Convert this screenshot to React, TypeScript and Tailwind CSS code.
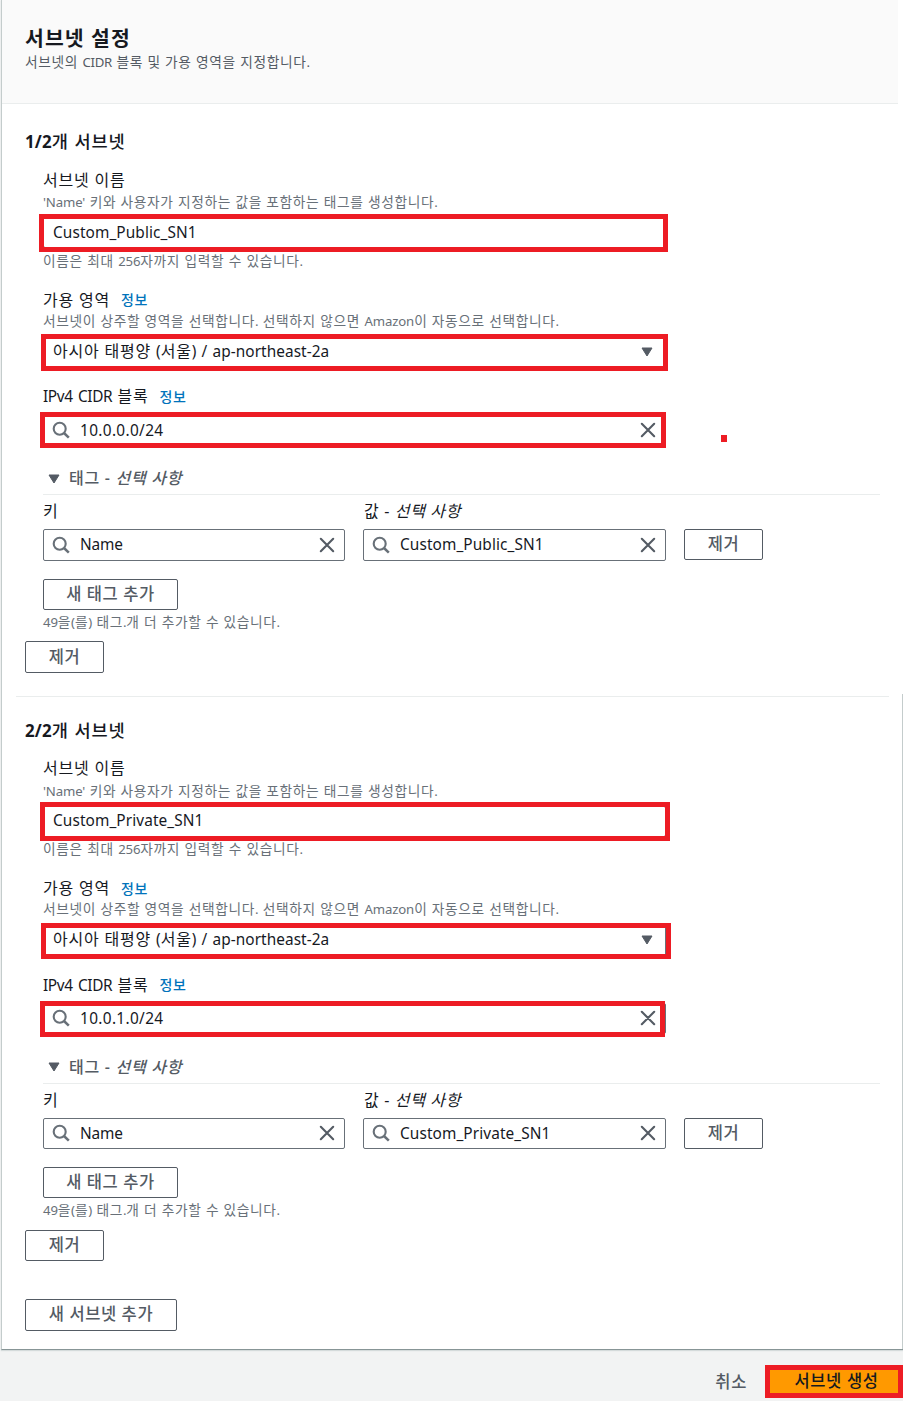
import { ReactNode } from 'react';
import clsx from 'clsx';

type Subnet = {
  title: string;
  name: string;
  cidr: string;
  nameMark: string;
  zoneMark: string;
  cidrMark: string;
};

const subnets: Subnet[] = [
  {
    title: '1/2개 서브넷',
    name: 'Custom_Public_SN1',
    cidr: '10.0.0.0/24',
    nameMark: '-left-[4px] -top-[3px] w-[629px] h-[38px]',
    zoneMark: '-left-[2px] -top-[3px] w-[627px] h-[37px]',
    cidrMark: '-left-[3px] -top-[2.4px] w-[626px] h-[36px]',
  },
  {
    title: '2/2개 서브넷',
    name: 'Custom_Private_SN1',
    cidr: '10.0.1.0/24',
    nameMark: '-left-[3px] -top-[3.5px] w-[630px] h-[39px]',
    zoneMark: '-left-[2px] -top-[2.5px] w-[630px] h-[36px]',
    cidrMark: '-left-[3px] -top-[1.9px] w-[625px] h-[36px]',
  },
];

// Hangul is set a little larger and wider than the Latin runs inside the same sentence
function Ko({ text, latin = 'tracking-[-0.01em]' }: { text: string; latin?: string }) {
  const parts = text.split(/([A-Za-z0-9'()\/.-]+)/);
  return (
    <span className="text-[1.04em] tracking-[0.045em] [word-spacing:0.02em]">
      {parts.map((part, i) => (i % 2 ? <span key={i} className={clsx('text-[0.9615em]', latin)}>{part}</span> : part))}
    </span>
  );
}

function SearchIcon() {
  return (
    <svg className="w-[18px] h-[18px] shrink-0" viewBox="0 0 18 18" fill="none" stroke="#687078" strokeWidth="2.1">
      <circle cx="7.7" cy="7.7" r="6" />
      <path d="M12 12l4.8 4.6" strokeWidth="2.5" />
    </svg>
  );
}

function CloseIcon() {
  return (
    <svg className="w-4 h-4 shrink-0" viewBox="0 0 16 16" fill="none" stroke="#545b64" strokeWidth="2.1" strokeLinecap="round">
      <path d="M1.8 1.8l12.4 12.4M14.2 1.8L1.8 14.2" />
    </svg>
  );
}

function CaretIcon() {
  return (
    <svg className="w-3 h-[10px] shrink-0" viewBox="0 0 12 10" fill="#545b64" stroke="#545b64" strokeLinejoin="round">
      <path d="M1 1h10L6 9z" />
    </svg>
  );
}

function Mark({ className }: { className: string }) {
  return <span className={clsx('absolute border-5 border-[#ed1c24] pointer-events-none', className)} />;
}

function Button({ className, children }: { className: string; children: ReactNode }) {
  return (
    <button
      className={clsx(
        'flex items-center justify-center border border-[#545b64] rounded-[2px] bg-white text-[#545b64] font-medium text-[16.5px] tracking-[0.035em] pb-[0.6px]',
        className
      )}
    >
      {children}
    </button>
  );
}

function SearchInput({ value, tracking, className }: { value: string; tracking: string; className: string }) {
  return (
    <div className={clsx('flex items-center h-[31.2px] border border-[#687078] rounded-[2px] bg-white pl-2 pr-[9px]', className)}>
      <SearchIcon />
      <span className={clsx('flex-1 pl-[10px]', tracking)}>{value}</span>
      <CloseIcon />
    </div>
  );
}

function Label({ info, className, children }: { info?: boolean; className?: string; children: ReactNode }) {
  return (
    <div className={clsx('flex items-center h-[22px] pt-[0.6px]', className)}>
      <span>{children}</span>
      {info && <a className="ml-[11px] text-[14px] tracking-[0.05em] font-medium text-[#0073bb]">정보</a>}
    </div>
  );
}

function Hint({ className, text }: { className?: string; text: string }) {
  return (
    <p className={clsx('h-5 leading-5 text-[13.2px] text-[#687078]', className)}>
      <Ko text={text} />
    </p>
  );
}

function SubnetForm({ subnet }: { subnet: Subnet }) {
  return (
    <section className="pl-[23px] text-[15.4px] leading-[22px]">
      <h3 className="h-6 leading-[22px] text-[16.9px] font-medium">
        <Ko text={subnet.title} latin="font-bold tracking-[0.01em]" />
      </h3>

      <div className="pl-[18px] pt-[15px]">
        <Label>
          <Ko text="서브넷 이름" />
        </Label>
        <Hint className="mt-px" text="'Name' 키와 사용자가 지정하는 값을 포함하는 태그를 생성합니다." />
        <div className="relative w-[623px] mt-[5px]">
          <div className="flex items-center h-[31.2px] border border-[#687078] rounded-[2px] pl-[9px] tracking-[0.006em]">
            {subnet.name}
          </div>
          <Mark className={subnet.nameMark} />
        </div>
        <Hint className="mt-[2.8px]" text="이름은 최대 256자까지 입력할 수 있습니다." />

        <Label info className="mt-[18px]">
          <Ko text="가용 영역" />
        </Label>
        <Hint text="서브넷이 상주할 영역을 선택합니다. 선택하지 않으면 Amazon이 자동으로 선택합니다." />
        <div className="relative w-[623px] mt-[6px]">
          <div className="flex items-center justify-between h-[31.2px] border border-[#687078] rounded-[2px] pl-[9px] pr-3 pb-[2px]">
            <span className="pb-px">
              <Ko text="아시아 태평양 (서울) / ap-northeast-2a" latin="tracking-[0.004em]" />
            </span>
            <CaretIcon />
          </div>
          <Mark className={subnet.zoneMark} />
        </div>

        <Label info className="mt-[17.2px]">
          <Ko text="IPv4 CIDR 블록" latin="tracking-[-0.022em]" />
        </Label>
        <div className="relative w-[623px] mt-[7px]">
          <SearchInput value={subnet.cidr} tracking="pt-[2px] tracking-[0.022em]" className="w-full" />
          <Mark className={subnet.cidrMark} />
        </div>

        <div className="flex items-center h-[22px] mt-[22.4px] pl-[5px] font-medium text-[#545b64]">
          <CaretIcon />
          <span className="ml-[9px] pb-[1.4px] text-[16px] tracking-[0.045em]">
            태그 - <i>선택 사항</i>
          </span>
        </div>
        <hr className="mt-[4.4px] w-[837px] border-t border-[#eaeded]" />

        <div className="flex mt-[4.6px]">
          <div className="w-[320px]">
            <Label className="text-[16px]">키</Label>
            <SearchInput value="Name" tracking="pt-px tracking-[-0.01em]" className="mt-[7.4px] w-[302px]" />
          </div>
          <div className="w-[321px]">
            <Label className="pl-px text-[16px] tracking-[0.04em]">
              값 - <i>선택 사항</i>
            </Label>
            <SearchInput value={subnet.name} tracking="pt-px tracking-[0.006em]" className="mt-[7.4px] w-[303px]" />
          </div>
          <Button className="mt-[29.4px] w-[79px] h-[30.8px]">제거</Button>
        </div>

        <Button className="mt-[18.1px] w-[135px] h-[31px]">새 태그 추가</Button>
        <Hint className="mt-[2.3px]" text="49을(를) 태그.개 더 추가할 수 있습니다." />
      </div>

      <Button className="mt-[9.4px] w-[79px] h-[31.4px]">제거</Button>
    </section>
  );
}

export default function App() {
  return (
    <div className="relative w-[903px] h-[1401px] overflow-hidden bg-[#f2f3f3] pl-px text-[#16191f] font-['Noto_Sans','Noto_Sans_CJK_KR',sans-serif]">
      <div className="h-[1350px] border-l border-b border-l-[#c4cccc] border-b-[#879596] shadow-[0_1px_1px_#d5dbdb] bg-white">
        <div className="h-[694px]">
          <header className="w-[896px] h-[104px] pl-[23px] pt-6 bg-[#fafafa] border-b border-[#eaeded]">
            <h2 className="h-[27px] leading-[29px] text-[20.4px] tracking-[0.055em] font-bold">서브넷 설정</h2>
            <p className="h-[22px] leading-[22px] text-[13.2px] text-[#545b64]">
              <Ko text="서브넷의 CIDR 블록 및 가용 영역을 지정합니다." latin="tracking-[-0.02em]" />
            </p>
          </header>
          <div className="pt-[26px]">
            <SubnetForm subnet={subnets[0]} />
          </div>
        </div>

        <div className="h-[655px] pt-[2px] border-r border-[#c4cccc]">
          <hr className="ml-[14px] w-[873px] border-t border-[#eaeded]" />
          <div className="pt-[21.5px]">
            <SubnetForm subnet={subnets[1]} />
          </div>
          <Button className="ml-[23px] mt-[37.7px] w-[152px] h-8">새 서브넷 추가</Button>
        </div>
      </div>

      <footer className="flex justify-end items-center pt-[15px] text-[16.5px] font-medium tracking-[0.04em]">
        <button className="mr-[18px] text-[#545b64] leading-[33px]">취소</button>
        <button className="w-[138px] h-[33px] flex items-center justify-center bg-[#ff9900] border-5 border-[#ed1c24] pl-[5px] pb-px">
          서브넷 생성
        </button>
      </footer>

      <span className="absolute left-[721px] top-[435px] w-[6px] h-[7px] bg-[#ed1c24]" />
    </div>
  );
}
